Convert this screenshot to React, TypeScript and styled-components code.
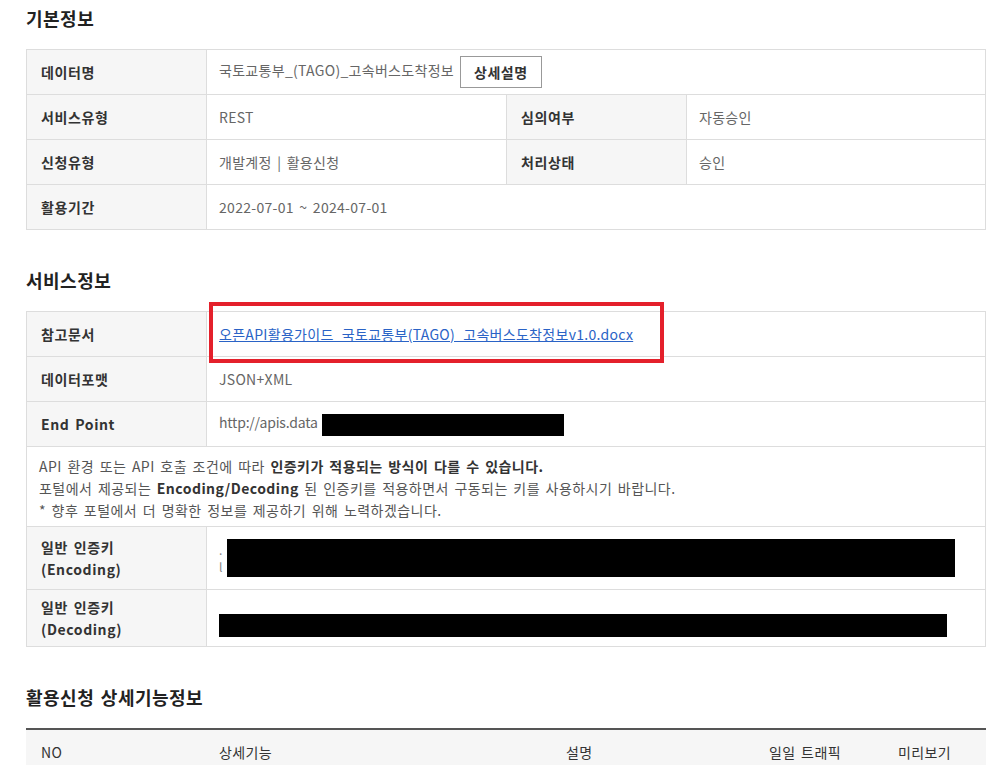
import React from "react";
import styled, { createGlobalStyle } from "styled-components";

const GlobalStyle = createGlobalStyle`
  html, body {
    margin: 0;
    padding: 0;
    background: #fff;
  }
  body {
    font-family: "Noto Sans CJK KR", "Noto Sans", "Liberation Sans", sans-serif;
    color: #333;
  }
`;

const Page = styled.div`
  width: 960px;
  padding: 6px 0 0 26px;
`;

const Section = styled.section`
  margin-bottom: 38px;
`;

const SectionTitle = styled.h3`
  margin: 0 0 19px;
  font-size: 18px;
  line-height: 24px;
  font-weight: 700;
  color: #222;
  letter-spacing: 0.5px;
  word-spacing: 2px;
`;

const InfoTable = styled.table`
  width: 960px;
  border-collapse: collapse;
  table-layout: fixed;
  border: 1px solid #dddddd;
`;

const Row = styled.tr<{ $h?: number }>`
  height: ${(p) => p.$h ?? 45}px;
`;

const Label = styled.th`
  box-sizing: border-box;
  padding: 0 14px;
  background: #f6f6f6;
  border: 1px solid #dddddd;
  text-align: left;
  font-size: 14px;
  font-weight: 700;
  color: #333;
  line-height: 22px;
  letter-spacing: 0.6px;
  word-spacing: 2px;
  vertical-align: middle;
`;

const Value = styled.td`
  position: relative;
  box-sizing: border-box;
  padding: 0 12px;
  border: 1px solid #dddddd;
  font-size: 14px;
  color: #666;
  line-height: 20px;
  letter-spacing: 0.3px;
  word-spacing: 2px;
  vertical-align: middle;
`;

const DetailButton = styled.button`
  height: 32px;
  margin-left: 6px;
  padding: 0 13px;
  border: 1px solid #999;
  background: #fff;
  font-family: inherit;
  font-size: 14px;
  font-weight: 700;
  color: #333;
  letter-spacing: 0.5px;
  vertical-align: middle;
`;

const DocLink = styled.a`
  color: #2a63c6;
  text-decoration: underline;
  font-size: 14px;
  letter-spacing: 0.3px;
`;

const Highlight = styled.span`
  position: absolute;
  left: 2px;
  top: -10px;
  width: 455px;
  height: 61px;
  box-sizing: border-box;
  border: 4px solid #e4202b;
  pointer-events: none;
`;

const Url = styled.span`
  letter-spacing: -0.2px;
  margin-right: 4px;
`;

const Redacted = styled.span<{ $w: number; $h: number }>`
  display: inline-block;
  width: ${(p) => p.$w}px;
  height: ${(p) => p.$h}px;
  background: #000;
  vertical-align: middle;
`;

const Notice = styled.td`
  padding: 8px 12px 5px;
  border: 1px solid #dddddd;
  font-size: 14px;
  line-height: 22px;
  color: #555;
  letter-spacing: 0.45px;
  word-spacing: 2px;

  b {
    color: #333;
    font-weight: 700;
  }
`;

const KeyCell = styled.div<{ $offset: number }>`
  display: flex;
  align-items: center;
  gap: 4px;
  margin-top: ${(p) => p.$offset}px;
`;

const KeyGlyphs = styled.span`
  display: flex;
  flex-direction: column;
  font-size: 12px;
  line-height: 17px;
  color: #888;
`;

const FeatureTable = styled.table`
  width: 960px;
  border-collapse: collapse;
  table-layout: fixed;
  border-top: 2px solid #555;
`;

const HeadCell = styled.th<{ $pad: number }>`
  height: 44px;
  padding: 0 0 0 ${(p) => p.$pad}px;
  background: #f6f6f6;
  text-align: left;
  font-size: 14px;
  font-weight: 400;
  color: #333;
  letter-spacing: 0.4px;
  word-spacing: 2px;
`;

export default function App() {
  return (
    <Page>
      <GlobalStyle />
      <Section>
        <SectionTitle>기본정보</SectionTitle>
        <InfoTable>
          <colgroup>
            <col style={{ width: 180 }} />
            <col style={{ width: 300 }} />
            <col style={{ width: 180 }} />
            <col />
          </colgroup>
          <tbody>
            <Row>
              <Label>데이터명</Label>
              <Value colSpan={3}>
                국토교통부_(TAGO)_고속버스도착정보
                <DetailButton>상세설명</DetailButton>
              </Value>
            </Row>
            <Row>
              <Label>서비스유형</Label>
              <Value>REST</Value>
              <Label>심의여부</Label>
              <Value>자동승인</Value>
            </Row>
            <Row>
              <Label>신청유형</Label>
              <Value>개발계정 | 활용신청</Value>
              <Label>처리상태</Label>
              <Value>승인</Value>
            </Row>
            <Row>
              <Label>활용기간</Label>
              <Value colSpan={3}>2022-07-01 ~ 2024-07-01</Value>
            </Row>
          </tbody>
        </InfoTable>
      </Section>

      <Section>
        <SectionTitle>서비스정보</SectionTitle>
        <InfoTable>
          <colgroup>
            <col style={{ width: 180 }} />
            <col />
          </colgroup>
          <tbody>
            <Row>
              <Label>참고문서</Label>
              <Value>
                <DocLink href="#">
                  오픈API활용가이드_국토교통부(TAGO)_고속버스도착정보v1.0.docx
                </DocLink>
                <Highlight />
              </Value>
            </Row>
            <Row>
              <Label>데이터포맷</Label>
              <Value>JSON+XML</Value>
            </Row>
            <Row>
              <Label>End Point</Label>
              <Value>
                <Url>http://apis.data</Url>
                <Redacted $w={242} $h={22} />
              </Value>
            </Row>
            <Row $h={80}>
              <Notice colSpan={2}>
                API 환경 또는 API 호출 조건에 따라 <b>인증키가 적용되는 방식이 다를 수 있습니다.</b>
                <br />
                포털에서 제공되는 <b>Encoding/Decoding</b> 된 인증키를 적용하면서 구동되는 키를 사용하시기 바랍니다.
                <br />* 향후 포털에서 더 명확한 정보를 제공하기 위해 노력하겠습니다.
              </Notice>
            </Row>
            <Row $h={63}>
              <Label>
                일반 인증키
                <br />
                (Encoding)
              </Label>
              <Value>
                <KeyCell $offset={0}>
                  <KeyGlyphs>
                    <span>.</span>
                    <span>l</span>
                  </KeyGlyphs>
                  <Redacted $w={728} $h={38} />
                </KeyCell>
              </Value>
            </Row>
            <Row $h={57}>
              <Label>
                일반 인증키
                <br />
                (Decoding)
              </Label>
              <Value>
                <KeyCell $offset={14}>
                  <Redacted $w={728} $h={23} />
                </KeyCell>
              </Value>
            </Row>
          </tbody>
        </InfoTable>
      </Section>

      <Section>
        <SectionTitle>활용신청 상세기능정보</SectionTitle>
        <FeatureTable>
          <colgroup>
            <col style={{ width: 180 }} />
            <col style={{ width: 347 }} />
            <col style={{ width: 203 }} />
            <col style={{ width: 129 }} />
            <col />
          </colgroup>
          <thead>
            <tr>
              <HeadCell $pad={15}>NO</HeadCell>
              <HeadCell $pad={13}>상세기능</HeadCell>
              <HeadCell $pad={13}>설명</HeadCell>
              <HeadCell $pad={13}>일일 트래픽</HeadCell>
              <HeadCell $pad={13}>미리보기</HeadCell>
            </tr>
          </thead>
        </FeatureTable>
      </Section>
    </Page>
  );
}
